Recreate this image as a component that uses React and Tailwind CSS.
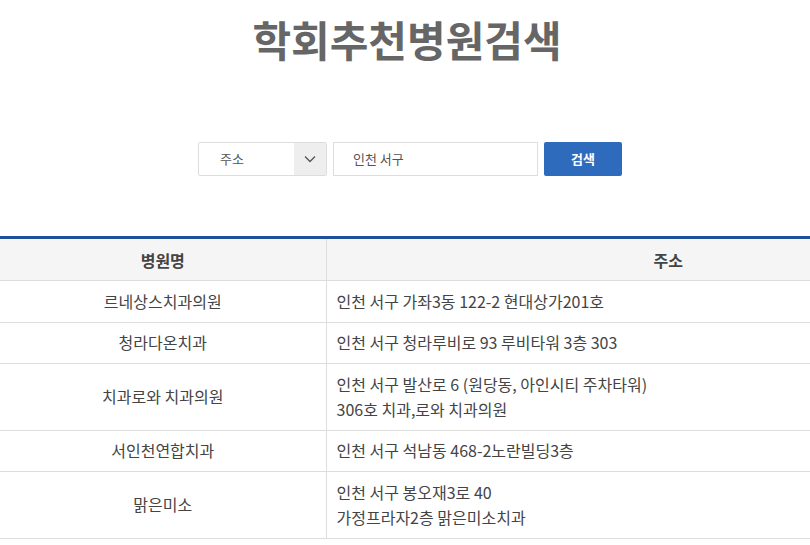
import React from "react";

const rows = [
  { name: "르네상스치과의원", addr: ["인천 서구 가좌3동 122-2 현대상가201호"] },
  { name: "청라다온치과", addr: ["인천 서구 청라루비로 93 루비타워 3층 303"] },
  { name: "치과로와 치과의원", addr: ["인천 서구 발산로 6 (원당동, 아인시티 주차타워)", "306호 치과,로와 치과의원"] },
  { name: "서인천연합치과", addr: ["인천 서구 석남동 468-2노란빌딩3층"] },
  { name: "맑은미소", addr: ["인천 서구 봉오재3로 40", "가정프라자2층 맑은미소치과"] },
];

export default function App() {
  return (
    <div className="w-[810px] overflow-hidden bg-white text-[#444]" style={{ fontFamily: '"Noto Sans CJK KR", "Noto Sans", sans-serif' }}>
      <h1 className="pt-[10px] pl-[4px] text-center text-[42px] font-bold leading-[58px] text-[#666]">
        학회추천병원검색
      </h1>
      <div className="mt-[74px] flex justify-center gap-[6px] pl-[10px]">
        <div className="flex h-[34px] w-[129px] overflow-hidden rounded-[2px] border border-[#ddd]">
          <div className="flex flex-1 items-center pl-[21px] text-[13px] text-[#555]">주소</div>
          <div className="flex w-[32px] items-center justify-center bg-[#eee]">
            <svg width="12" height="8" viewBox="0 0 12 8" fill="none">
              <path d="M1 1.5 L6 6.5 L11 1.5" stroke="#555" strokeWidth="1.3" />
            </svg>
          </div>
        </div>
        <div className="flex h-[34px] w-[205px] items-center border border-[#ddd] pl-[19px] text-[13px] text-[#555]">
          인천 서구
        </div>
        <button className="h-[34px] w-[78px] rounded-[2px] bg-[#2f6bbd] text-[13px] font-bold text-white">
          검색
        </button>
      </div>
      <table className="mt-[60px] w-[1010px] max-w-none border-collapse border-t-[3px] border-[#1f4f97] text-[16px]">
        <thead>
          <tr className="bg-[#f5f5f5]">
            <th className="h-[43px] w-[326px] border-b border-r border-[#ddd] text-center font-bold text-[#444]">병원명</th>
            <th className="h-[43px] border-b border-[#ddd] text-center font-bold text-[#444]">주소</th>
          </tr>
        </thead>
        <tbody>
          {rows.map((r) => (
            <tr key={r.name}>
              <td className="border-b border-r border-[#ddd] py-[7.75px] text-center leading-[25px]">{r.name}</td>
              <td className="border-b border-[#ddd] py-[7.75px] pl-[10px] leading-[25px]">
                {r.addr.map((a) => (
                  <div key={a}>{a}</div>
                ))}
              </td>
            </tr>
          ))}
        </tbody>
      </table>
      <div className="h-[20px]" />
    </div>
  );
}
